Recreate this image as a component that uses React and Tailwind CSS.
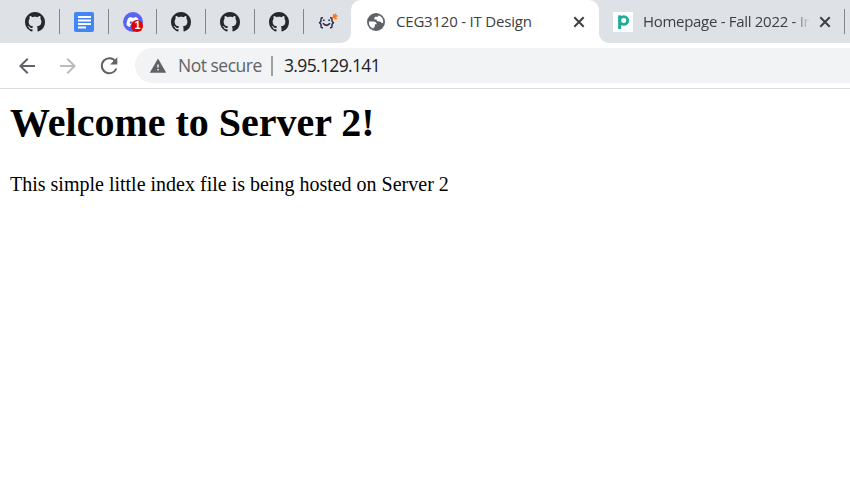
import React from "react";
import { FaDiscord } from "react-icons/fa";
import { MdWarning, MdArrowBack, MdArrowForward } from "react-icons/md";

const GitHubMark = () => (
  <svg viewBox="0 0 16 16" className="size-5" fill="#24292f">
    <path d="M8 0C3.58 0 0 3.58 0 8c0 3.54 2.29 6.53 5.47 7.59.4.07.55-.17.55-.38 0-.19-.01-.82-.01-1.49-2.01.37-2.53-.49-2.69-.94-.09-.23-.48-.94-.82-1.13-.28-.15-.68-.52-.01-.53.63-.01 1.08.58 1.23.82.72 1.21 1.87.87 2.33.66.07-.52.28-.87.51-1.07-1.78-.2-3.64-.89-3.64-3.95 0-.87.31-1.59.82-2.15-.08-.2-.36-1.02.08-2.12 0 0 .67-.21 2.2.82.64-.18 1.32-.27 2-.27s1.36.09 2 .27c1.53-1.04 2.2-.82 2.2-.82.44 1.1.16 1.92.08 2.12.51.56.82 1.27.82 2.15 0 3.07-1.87 3.75-3.65 3.95.29.25.54.73.54 1.48 0 1.07-.01 1.93-.01 2.2 0 .21.15.46.55.38A8.01 8.01 0 0016 8c0-4.42-3.58-8-8-8z" />
  </svg>
);

const DocsIcon = () => (
  <svg viewBox="0 0 20 20" className="size-5">
    <rect width="20" height="20" rx="2" fill="#4285f4" />
    <path d="M4 5h13M4 8.500h13M4 12h13M4 15.500h8" stroke="#fff" strokeWidth="2" />
  </svg>
);

const DiscordIcon = () => (
  <div className="relative left-px flex size-5 items-center justify-center rounded-full bg-[#5865f2]">
    <FaDiscord className="size-[14px] text-white" />
    <span className="absolute right-0 bottom-0 flex size-3 items-center justify-center rounded-full bg-[#e00000] font-['Liberation_Sans'] text-[11px] leading-none font-bold text-white">1</span>
  </div>
);

const SmileIcon = () => (
  <svg viewBox="0 0 20 20" className="size-5" fill="none" stroke="#2b2a50" strokeWidth="1.5">
    <path d="M5 5.700H4.200Q3 5.700 3 7V9.200L1.600 10.800L3 12.300V14.500Q3 15.800 4.200 15.800H5M12 5.700h.800Q14 5.700 14 7v2.200l1.400 1.600-1.400 1.500v2.200q0 1.300-1.200 1.300H12" />
    <path d="M5 11.300Q8.500 15.500 12 11.300" strokeWidth="1.600" />
    <path d="M5 8.300h1.600M10.300 8.300h1.600" />
    <path d="M14 6l5.500-2.500M15.200 2.200l3.400 5M14.700 4h4.800M17.600 1.500l-.800 6" stroke="#ff7a1a" strokeWidth="1.400" />
  </svg>
);

const GlobeIcon = () => (
  <svg viewBox="0 0 20 20" className="size-5 shrink-0">
    <circle cx="10" cy="10" r="9" fill="#5f6368" />
    <path d="M2.900 9.400h4.500c2 0 3.300 1.200 3.300 2.900h-1.800v1.800c0 .9-.7 1.500-1.500 1.500v1.100A7.200 7.200 0 012.900 9.400z" fill="#fff" />
    <path d="M12.600 3.300A7.200 7.200 0 0117.200 10.500c-.7 1-1.400.8-1.900.1-.5-.8-1.200-1.100-2.300-1.100-1.600 0-2.500-.8-2.500-2H8.300V6.300c0-.9.700-1.500 1.600-1.500h1.200c.9 0 1.500-.6 1.500-1.500z" fill="#fff" />
  </svg>
);

const ReloadIcon = () => (
  <svg viewBox="0 0 24 24" className="ml-[17px] size-6">
    <path d="M18.500 7.500A7.500 7.500 0 1019.300 14.500" fill="none" stroke="currentColor" strokeWidth="2" />
    <path d="M20.300 3.300v7.200h-7.200z" fill="currentColor" />
  </svg>
);

const CloseIcon = () => (
  <svg viewBox="0 0 12 12" className="size-3 shrink-0" stroke="#3c4043" strokeWidth="2">
    <path d="M1.300 1.300l9.400 9.400M10.700 1.300L1.300 10.700" />
  </svg>
);

const pinned = [GitHubMark, DocsIcon, DiscordIcon, GitHubMark, GitHubMark, GitHubMark, SmileIcon];

export default function App() {
  return (
    <div className="h-[501px] w-[850px] overflow-hidden bg-white">
      <div className="flex h-[43px] bg-[#dee1e6] font-['Open_Sans',sans-serif] text-[15px] text-[#3c4043]">
        <div className="flex w-[351px] shrink-0 items-center pl-[11px]">
          {pinned.map((Icon, i) => (
            <div key={i} className="flex w-[48.8px] shrink-0 items-center">
              <div className="flex w-[47.8px] justify-center"><Icon /></div>
              {i < 6 && <div className="h-[25px] w-px bg-[#80868b]" />}
            </div>
          ))}
        </div>
        <div className="relative flex w-[248px] shrink-0 items-center rounded-t-[10px] bg-white pr-[14px] pl-[15px]">
          <svg viewBox="0 0 10 10" className="absolute bottom-0 -left-[10px] size-[10px]" fill="#fff"><path d="M10 0v10H0A10 10 0 0010 0" /></svg>
          <svg viewBox="0 0 10 10" className="absolute -right-[10px] bottom-0 size-[10px]" fill="#fff"><path d="M0 0v10h10A10 10 0 010 0" /></svg>
          <GlobeIcon />
          <span className="-mt-px ml-[10px] flex-1 tracking-[-0.2px] whitespace-nowrap">CEG3120 - IT Design</span>
          <CloseIcon />
        </div>
        <div className="flex min-w-0 flex-1 items-center pl-[14px]">
          <div className="flex size-5 shrink-0 items-center justify-center bg-white">
            <svg viewBox="0 0 20 20" className="size-5" fill="none" stroke="#1fac99" strokeWidth="2.900"><path d="M6.600 3.300V17" /><ellipse cx="10.700" cy="8.500" rx="4" ry="3.900" /></svg>
          </div>
          <span className="-mt-px ml-[10px] w-[167px] overflow-hidden mask-r-from-[151px] mask-r-to-[167px] tracking-[-0.3px] whitespace-nowrap">Homepage - Fall 2022 - In</span>
          <div className="ml-[9px]"><CloseIcon /></div>
          <div className="ml-[13px] h-[25px] w-px bg-[#80868b]" />
        </div>
      </div>
      <div className="flex h-[46px] items-center border-b border-[#dadce0] pl-[15px] font-['Open_Sans',sans-serif] text-[17.500px] text-[#5f6368]">
        <MdArrowBack className="size-6" />
        <MdArrowForward className="ml-[17px] size-6 text-[#babcbe]" />
        <ReloadIcon />
        <div className="ml-[14px] flex h-[35px] flex-1 items-center rounded-l-full bg-[#f1f3f4] pl-[14px]">
          <MdWarning className="size-[18px]" />
          <span className="ml-[11px] w-[84px] tracking-[-0.5px] whitespace-nowrap">Not secure</span>
          <div className="ml-[9px] h-5 w-[2px] bg-[#9aa0a6]" />
          <span className="ml-[11px] tracking-[-0.65px] text-[#202124]">3.95.129.141</span>
        </div>
      </div>
      <main className="px-[10px] pt-[11px] font-['Liberation_Serif',serif] text-black">
        <h1 className="text-[40px] leading-[46px] font-bold">Welcome to Server 2!</h1>
        <p className="mt-[27px] text-xl leading-[23px]">This simple little index file is being hosted on Server 2</p>
      </main>
    </div>
  );
}
